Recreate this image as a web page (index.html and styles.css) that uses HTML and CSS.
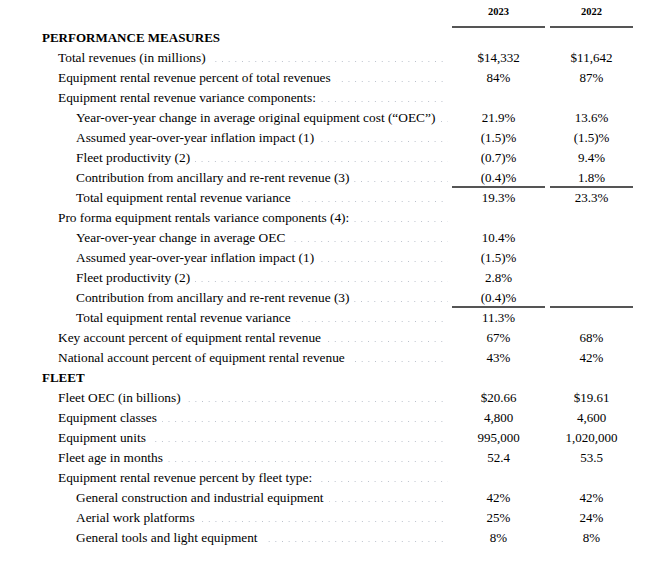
FILE: index.html
```html
<!DOCTYPE html>
<html lang="en">
<head>
<meta charset="utf-8">
<title>Performance measures</title>
<link rel="stylesheet" href="styles.css">
</head>
<body>
<div class="table">
  <div class="row head">
    <div class="label"></div>
    <div class="v1 year">2023</div>
    <div class="v2 year">2022</div>
  </div>

  <div class="row"><div class="label section"><span>PERFORMANCE MEASURES</span></div><div class="v1"></div><div class="v2"></div></div>
  <div class="row"><div class="label l1"><span>Total revenues (in millions)</span><i class="dots"></i></div><div class="v1">$14,332</div><div class="v2">$11,642</div></div>
  <div class="row"><div class="label l1"><span>Equipment rental revenue percent of total revenues</span><i class="dots"></i></div><div class="v1">84%</div><div class="v2">87%</div></div>
  <div class="row"><div class="label l1"><span>Equipment rental revenue variance components:</span><i class="dots"></i></div><div class="v1"></div><div class="v2"></div></div>
  <div class="row"><div class="label l2"><span>Year-over-year change in average original equipment cost (“OEC”)</span><i class="dots"></i></div><div class="v1">21.9%</div><div class="v2">13.6%</div></div>
  <div class="row"><div class="label l2"><span>Assumed year-over-year inflation impact (1)</span><i class="dots"></i></div><div class="v1">(1.5)%</div><div class="v2">(1.5)%</div></div>
  <div class="row"><div class="label l2"><span>Fleet productivity (2)</span><i class="dots"></i></div><div class="v1">(0.7)%</div><div class="v2">9.4%</div></div>
  <div class="row"><div class="label l2"><span>Contribution from ancillary and re-rent revenue (3)</span><i class="dots"></i></div><div class="v1 rule">(0.4)%</div><div class="v2 rule">1.8%</div></div>
  <div class="row"><div class="label l2"><span>Total equipment rental revenue variance</span><i class="dots"></i></div><div class="v1">19.3%</div><div class="v2">23.3%</div></div>
  <div class="row"><div class="label l1"><span>Pro forma equipment rentals variance components (4):</span><i class="dots"></i></div><div class="v1"></div><div class="v2"></div></div>
  <div class="row"><div class="label l2"><span>Year-over-year change in average OEC</span><i class="dots"></i></div><div class="v1">10.4%</div><div class="v2"></div></div>
  <div class="row"><div class="label l2"><span>Assumed year-over-year inflation impact (1)</span><i class="dots"></i></div><div class="v1">(1.5)%</div><div class="v2"></div></div>
  <div class="row"><div class="label l2"><span>Fleet productivity (2)</span><i class="dots"></i></div><div class="v1">2.8%</div><div class="v2"></div></div>
  <div class="row"><div class="label l2"><span>Contribution from ancillary and re-rent revenue (3)</span><i class="dots"></i></div><div class="v1 rule">(0.4)%</div><div class="v2 rule"></div></div>
  <div class="row"><div class="label l2"><span>Total equipment rental revenue variance</span><i class="dots"></i></div><div class="v1">11.3%</div><div class="v2"></div></div>
  <div class="row"><div class="label l1"><span>Key account percent of equipment rental revenue</span><i class="dots"></i></div><div class="v1">67%</div><div class="v2">68%</div></div>
  <div class="row"><div class="label l1"><span>National account percent of equipment rental revenue</span><i class="dots"></i></div><div class="v1">43%</div><div class="v2">42%</div></div>

  <div class="row"><div class="label section"><span>FLEET</span></div><div class="v1"></div><div class="v2"></div></div>
  <div class="row"><div class="label l1"><span>Fleet OEC (in billions)</span><i class="dots"></i></div><div class="v1">$20.66</div><div class="v2">$19.61</div></div>
  <div class="row"><div class="label l1"><span>Equipment classes</span><i class="dots"></i></div><div class="v1">4,800</div><div class="v2">4,600</div></div>
  <div class="row"><div class="label l1"><span>Equipment units</span><i class="dots"></i></div><div class="v1">995,000</div><div class="v2">1,020,000</div></div>
  <div class="row"><div class="label l1"><span>Fleet age in months</span><i class="dots"></i></div><div class="v1">52.4</div><div class="v2">53.5</div></div>
  <div class="row"><div class="label l1"><span>Equipment rental revenue percent by fleet type:</span><i class="dots"></i></div><div class="v1"></div><div class="v2"></div></div>
  <div class="row"><div class="label l2"><span>General construction and industrial equipment</span><i class="dots"></i></div><div class="v1">42%</div><div class="v2">42%</div></div>
  <div class="row"><div class="label l2"><span>Aerial work platforms</span><i class="dots"></i></div><div class="v1">25%</div><div class="v2">24%</div></div>
  <div class="row"><div class="label l2"><span>General tools and light equipment</span><i class="dots"></i></div><div class="v1">8%</div><div class="v2">8%</div></div>
</div>
</body>
</html>
```

FILE: styles.css
```css
html, body {
  margin: 0;
  padding: 0;
  background: #ffffff;
}

body {
  font-family: "Liberation Serif", "Times New Roman", serif;
  font-size: 13px;
  color: #000000;
}

.table {
  display: flex;
  flex-direction: column;
  padding-left: 42px;
}

.row {
  display: flex;
  height: 20px;
  line-height: 20px;
}

.row.head {
  height: 28px;
  line-height: 16px;
  align-items: flex-end;
}

.label {
  flex: 0 0 406px;
  display: flex;
  padding-right: 4px;
  white-space: nowrap;
  font-size: 13.35px;
}

.label.l1 { padding-left: 16px; flex-basis: 390px; }
.label.l2 { padding-left: 34px; flex-basis: 372px; }

.section {
  font-weight: bold;
  font-size: 13px;
}

.dots {
  flex: 1 1 auto;
  margin-left: 5px;
  background-image: linear-gradient(to right, #b9bfca 1.4px, transparent 1.4px);
  background-size: 6.67px 1.4px;
  background-repeat: repeat-x;
  background-position: right 0 top 13px;
}

.v1, .v2 {
  text-align: center;
  box-sizing: border-box;
}

.v1 { flex: 0 0 93px; }
.v2 { flex: 0 0 83px; margin-left: 5px; }

.year {
  font-weight: bold;
  font-size: 10.5px;
  height: 28px;
  padding-bottom: 6px;
  border-bottom: 2px solid #555555;
  display: flex;
  align-items: flex-end;
  justify-content: center;
}

.rule {
  border-bottom: 2px solid #555555;
  line-height: 20px;
}
```
